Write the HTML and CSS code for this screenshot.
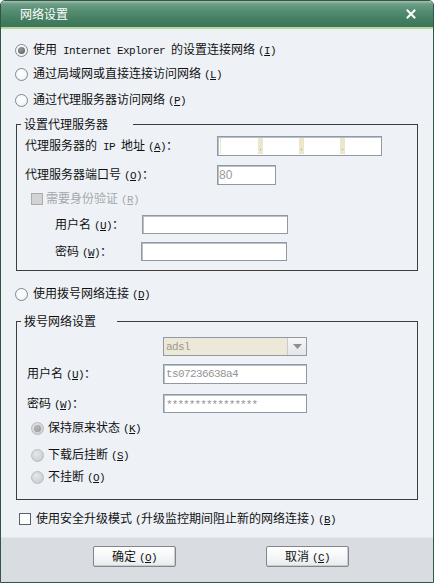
FILE: index.html
```html
<!DOCTYPE html>
<html lang="zh">
<head>
<meta charset="utf-8">
<title>网络设置</title>
<link rel="stylesheet" href="styles.css">
</head>
<body>
<div class="win">
  <div class="title">
    <span class="ttext">网络设置</span>
    <svg class="close" width="10" height="10" viewBox="0 0 10 10"><path d="M1.5 1.5 L8.5 8.5 M8.5 1.5 L1.5 8.5" stroke="#fff" stroke-width="2" stroke-linecap="square"/></svg>
  </div>
  <div class="content">
    <div class="opt r1"><span class="radio on"></span><span>使用<span class="en"> Internet Explorer </span>的设置连接网络<span class="en mn">(<u>I</u>)</span></span></div>
    <div class="opt r2"><span class="radio"></span><span>通过局域网或直接连接访问网络<span class="en mn">(<u>L</u>)</span></span></div>
    <div class="opt r3"><span class="radio"></span><span>通过代理服务器访问网络<span class="en mn">(<u>P</u>)</span></span></div>

    <fieldset class="group g1">
      <legend>设置代理服务器</legend>
      <div class="frow ip-row">
        <span class="lbl w-ip">代理服务器的<span class="en"> IP </span>地址<span class="en mn">(<u>A</u>)</span>：</span>
        <div class="input ip"><span class="seg"></span><span class="dot"></span><span class="seg"></span><span class="dot"></span><span class="seg"></span><span class="dot"></span><span class="seg"></span></div>
      </div>
      <div class="frow port-row">
        <span class="lbl w-ip">代理服务器端口号<span class="en mn">(<u>O</u>)</span>：</span>
        <div class="input port"><span class="val">80</span></div>
      </div>
      <div class="frow chk-row dis">
        <span class="check disabled"></span><span>需要身份验证<span class="en mn">(<u>R</u>)</span></span>
      </div>
      <div class="frow user-row">
        <span class="lbl w-user">用户名<span class="en mn">(<u>U</u>)</span>：</span>
        <div class="input u1"></div>
      </div>
      <div class="frow pass-row">
        <span class="lbl w-user">密码<span class="en mn">(<u>W</u>)</span>：</span>
        <div class="input p1"></div>
      </div>
    </fieldset>

    <div class="opt r4"><span class="radio"></span><span>使用拨号网络连接<span class="en mn">(<u>D</u>)</span></span></div>

    <fieldset class="group g2">
      <legend>拨号网络设置</legend>
      <div class="frow dd-row">
        <div class="select"><span class="val en">adsl</span><span class="arrow"><svg width="9" height="5" viewBox="0 0 9 5"><path d="M0 0 H9 L4.5 5 Z" fill="#8c8f93"/></svg></span></div>
      </div>
      <div class="frow d-user">
        <span class="lbl w-dial">用户名<span class="en mn">(<u>U</u>)</span>：</span>
        <div class="input dial"><span class="val en">ts07236638a4</span></div>
      </div>
      <div class="frow d-pass">
        <span class="lbl w-dial">密码<span class="en mn">(<u>W</u>)</span>：</span>
        <div class="input dial dp"><span class="val en">****************</span></div>
      </div>
      <div class="frow dr dr1"><span class="radio dis on"></span><span>保持原来状态<span class="en mn">(<u>K</u>)</span></span></div>
      <div class="frow dr dr2"><span class="radio dis"></span><span>下载后挂断<span class="en mn">(<u>S</u>)</span></span></div>
      <div class="frow dr dr3"><span class="radio dis"></span><span>不挂断<span class="en mn">(<u>O</u>)</span></span></div>
    </fieldset>

    <div class="opt safe"><span class="check"></span><span>使用安全升级模式<span class="en mn">(</span>升级监控期间阻止新的网络连接<span class="en">)</span><span class="en mn">(<u>B</u>)</span></span></div>
  </div>
  <div class="footer">
    <button class="btn">确定<span class="en mn">(<u>O</u>)</span></button>
    <button class="btn">取消<span class="en mn">(<u>C</u>)</span></button>
  </div>
</div>
</body>
</html>
```

FILE: styles.css
```css
html, body {
  margin: 0;
  padding: 0;
  background: #ffffff;
}
body {
  font-family: "Noto Sans CJK SC", "Noto Sans", sans-serif;
  font-size: 12px;
  line-height: 14px;
  color: #111;
}
.en {
  font-family: "Liberation Mono", "DejaVu Sans Mono", monospace;
  font-size: 11px;
  letter-spacing: -0.6px;
  white-space: pre;
}
.mn { margin-left: 3px; }
u { text-decoration: underline; text-underline-offset: 1px; }

.win {
  box-sizing: border-box;
  width: 434px;
  height: 583px;
  border: 1px solid #2e5744;
  border-radius: 5px 5px 0 0;
  display: flex;
  flex-direction: column;
  overflow: hidden;
  background: #eef2f7;
}
.title {
  height: 26px;
  border-bottom: 2px solid #b9d79c;
  background: linear-gradient(to bottom, #a9bfb3 0px, #6c9e85 3px, #558d71 10px, #457f63 18px, #3c7659 26px);
  display: flex;
  align-items: center;
  justify-content: space-between;
  padding: 0 17px 0 19px;
  flex: none;
}
.ttext {
  color: #fff;
  font-size: 12px;
}
.close { display: block; margin-top: -1px; }

.content {
  flex: none;
  height: 508px;
  box-sizing: border-box;
  padding-top: 9px;
  display: flex;
  flex-direction: column;
}
.opt {
  display: flex;
  align-items: center;
  height: 24px;
  margin-left: 14px;
  gap: 5px;
}
.r3 { margin-top: 2px; }
.r4 { margin-top: 11px; }

.radio {
  box-sizing: border-box;
  width: 13px;
  height: 13px;
  border-radius: 50%;
  border: 1px solid #7d8893;
  background: radial-gradient(circle at 40% 35%, #ffffff 0, #f4f6f8 60%, #dde2e7 100%);
  flex: none;
  position: relative;
}
.radio.on::after {
  content: "";
  position: absolute;
  left: 2px;
  top: 2px;
  width: 7px;
  height: 7px;
  border-radius: 50%;
  background: radial-gradient(circle at 40% 35%, #9a9a9a 0, #6a6a6a 70%);
}
.radio.dis {
  border-color: #b9bdc2;
  background: radial-gradient(circle at 40% 35%, #e6e8ea 0, #cdd0d4 70%, #c3c7cb 100%);
}
.radio.dis.on::after {
  background: radial-gradient(circle at 40% 35%, #b8b8b8 0, #9c9c9c 80%);
}

.check {
  box-sizing: border-box;
  width: 12px;
  height: 12px;
  border: 1px solid #59636d;
  background: #fff;
  flex: none;
}
.check.disabled {
  border-color: #a9abad;
  background: #d2d3d4;
}

.group {
  margin: 5px 15px 0 15px;
  padding: 0 8px 0 8px;
  border: 1px solid #3d3d3d;
  display: flex;
  flex-direction: column;
  min-width: 0;
}
.group legend {
  margin-left: -4px;
  padding: 0 25px 0 3px;
  line-height: 14px;
  height: 14px;
}
.g1 { padding-bottom: 9px; }
.g2 { margin-top: 8px; padding-left: 10px; padding-bottom: 14px; }
.g2 legend { margin-left: -6px; padding-right: 21px; }

.frow {
  display: flex;
  align-items: center;
}
.lbl { flex: none; }
.w-ip { width: 192px; }
.w-user { width: 87px; }
.w-dial { width: 136px; }

.ip-row { margin-top: 5px; height: 20px; }
.port-row { margin-top: 9px; height: 20px; }
.chk-row { margin-top: 6px; height: 16px; margin-left: 6px; gap: 3px; color: #a5a8ab; }
.user-row { margin-top: 8px; height: 19px; padding-left: 30px; }
.pass-row { margin-top: 8px; height: 19px; padding-left: 30px; }

.input {
  box-sizing: border-box;
  height: 100%;
  background: #fff;
  border: 1px solid #8f9aa5;
  box-shadow: inset 1px 1px 0 #b9c0c7;
  display: flex;
  align-items: center;
}
.ip { width: 165px; padding: 1px 0 1px 2px; }
.ip .seg { width: 36px; height: 100%; }
.ip .seg:first-child { width: 1px; background: #ece7d0; margin-right: 37px; }
.ip .dot {
  width: 5px;
  height: 100%;
  background: #ebe6cc;
  position: relative;
}
.ip .dot::after {
  content: "";
  position: absolute;
  left: 2px;
  bottom: 4px;
  width: 1px;
  height: 1px;
  background: #a8a48c;
}
.port { width: 59px; }
.port .val {
  font-family: "Liberation Sans", "Noto Sans", sans-serif;
  font-size: 12px;
  color: #9a9a9a;
  padding-left: 1px;
}
.u1 { width: 146px; }
.p1 { width: 146px; margin-left: -1px; }

.dd-row { margin-top: 9px; height: 19px; padding-left: 136px; }
.select {
  box-sizing: border-box;
  width: 144px;
  height: 100%;
  border: 1px solid #8f9aa5;
  background: #ece9d8;
  display: flex;
  align-items: center;
  justify-content: space-between;
}
.select .val { color: #9c9a8c; padding-left: 2px; }
.select .arrow {
  box-sizing: border-box;
  width: 19px;
  height: 100%;
  background: linear-gradient(#f6f6f6, #e4e6e8);
  border-left: 1px solid #c8ccd0;
  display: flex;
  align-items: center;
  justify-content: center;
}
.d-user { margin-top: 8px; height: 20px; }
.d-pass { margin-top: 10px; height: 19px; }
.dial { width: 144px; }
.dial .val { color: #949494; padding-left: 2px; }
.dp .val { letter-spacing: -0.9px; font-size: 11px; padding-top: 2px; }

.dr { height: 16px; gap: 4px; margin-left: 4px; }
.dr1 { margin-top: 7px; }
.dr2 { margin-top: 11px; }
.dr3 { margin-top: 6px; }

.safe {
  margin-top: 10px;
  margin-left: 18px;
  height: 18px;
  gap: 5px;
}

.footer {
  flex: none;
  height: 45px;
  box-sizing: border-box;
  background: #d9dde1;
  border-top: 1px solid #e6e9ec;
  padding: 8px 0 0 92px;
  display: flex;
  align-items: flex-start;
  gap: 90px;
}
.btn {
  box-sizing: border-box;
  width: 83px;
  height: 21px;
  margin: 0;
  padding: 0;
  border: 1px solid #7f868d;
  border-radius: 2px;
  background: linear-gradient(#ffffff 0, #f6f7f8 50%, #e7e9eb 100%);
  box-shadow: inset -1px -1px 0 #c9cdd1;
  font-family: "Noto Sans CJK SC", "Noto Sans", sans-serif;
  font-size: 12px;
  line-height: 14px;
  color: #111;
}
```
